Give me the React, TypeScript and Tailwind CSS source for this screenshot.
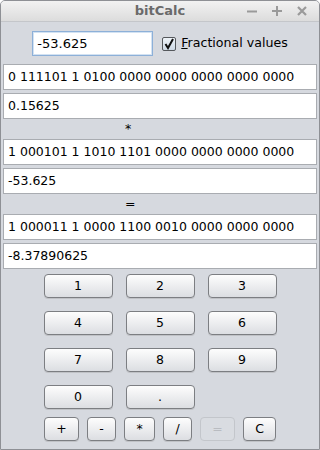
import React from 'react';

const fields = [
  { bits: '0 111101 1 0100 0000 0000 0000 0000 0000', value: '0.15625', op: '*' },
  { bits: '1 000101 1 1010 1101 0000 0000 0000 0000', value: '-53.625', op: '=' },
  { bits: '1 000011 1 0000 1100 0010 0000 0000 0000', value: '-8.37890625', op: '' },
];

const Field = ({ text, className = '' }: { text: string; className?: string }) => (
  <div
    className={`h-[26px] flex items-center px-[4px] bg-white border border-[#a9acb1] text-[12.5px] text-black leading-none ${className}`}
  >
    {text}
  </div>
);

const Key = ({ label, w, disabled }: { label: string; w: string; disabled?: boolean }) => (
  <button
    className={`${w} h-[24px] rounded-[4px] border text-[12.5px] leading-none flex items-center justify-center ${
      disabled
        ? 'border-[#c3c6cb] bg-[#d9dce1] text-[#b9bcc1]'
        : 'border-[#7c7e82] bg-gradient-to-b from-[#fdfdfd] to-[#dcdee2] text-black shadow-[0_1px_0_#c0c2c6]'
    }`}
  >
    {label}
  </button>
);

const App = () => {
  const digits = ['1', '2', '3', '4', '5', '6', '7', '8', '9', '0', '.'];
  const ops = [
    { l: '+', w: 'w-[35px]' },
    { l: '-', w: 'w-[29px]' },
    { l: '*', w: 'w-[31px]' },
    { l: '/', w: 'w-[29px]' },
    { l: '=', w: 'w-[35px]', d: true },
    { l: 'C', w: 'w-[33px]' },
  ];

  return (
    <div className="w-[320px] h-[450px] flex flex-col overflow-hidden rounded-t-[5px] border border-[#8e9095] bg-[#d6d9df] font-['DejaVu_Sans',sans-serif]">
      {/* title bar */}
      <div className="h-[21px] grid grid-cols-[1fr_auto_1fr] items-center bg-gradient-to-b from-[#f2f2f2] to-[#dcdcdc] border-b border-[#c4c6ca]">
        <div />
        <span className="text-[13px] font-bold text-[#6a6a6a]">bitCalc</span>
        <div className="flex justify-end items-center gap-[13px] pr-[11px]">
          <svg width="12" height="12" viewBox="0 0 12 12">
            <path d="M1 6.5h10" stroke="#9a9a9a" strokeWidth="2" />
          </svg>
          <svg width="12" height="12" viewBox="0 0 12 12">
            <path d="M1 6h10M6 1v10" stroke="#9a9a9a" strokeWidth="2" />
          </svg>
          <svg width="12" height="12" viewBox="0 0 12 12">
            <path d="M2 2l8 8M10 2l-8 8" stroke="#9a9a9a" strokeWidth="2.2" />
          </svg>
        </div>
      </div>

      {/* input row */}
      <div className="mt-[9px] flex justify-center items-center">
        <div className="w-[121px] h-[25px] flex items-center px-[4px] bg-white border border-[#8db0d8] shadow-[inset_0_0_0_1px_#d3e2f2] text-[13px]">
          -53.625
        </div>
        <div className="ml-[9px] w-[14px] h-[14px] rounded-[2px] border border-[#55585c] bg-gradient-to-b from-[#eef3f8] to-[#cdd8e4] flex items-center justify-center">
          <svg width="12" height="12" viewBox="0 0 12 12">
            <path d="M2.5 6l2.5 4L10 1" fill="none" stroke="#111" strokeWidth="2" />
          </svg>
        </div>
        <span className="ml-[5px] text-[12.6px] text-black">
          <span className="underline">F</span>ractional values
        </span>
      </div>

      {/* fields */}
      <div className="mt-[8px] px-[2px] flex flex-col">
        {fields.map((f, i) => (
          <div key={i} className="flex flex-col">
            <Field text={f.bits} />
            <Field text={f.value} className="mt-[3px]" />
            {f.op && (
              <div className="h-[20px] flex items-center pl-[122px] text-[12.5px] text-black">{f.op}</div>
            )}
          </div>
        ))}
      </div>

      {/* keypad */}
      <div className="mt-[5px] mx-auto grid grid-cols-[69px_69px_69px] gap-x-[13px] gap-y-[13px]">
        {digits.map((d) => (
          <Key key={d} label={d} w="w-[69px]" />
        ))}
      </div>
      <div className="mt-[8px] flex justify-center gap-[8px]">
        {ops.map((o) => (
          <Key key={o.l} label={o.l} w={o.w} disabled={o.d} />
        ))}
      </div>
    </div>
  );
};

export default App;
